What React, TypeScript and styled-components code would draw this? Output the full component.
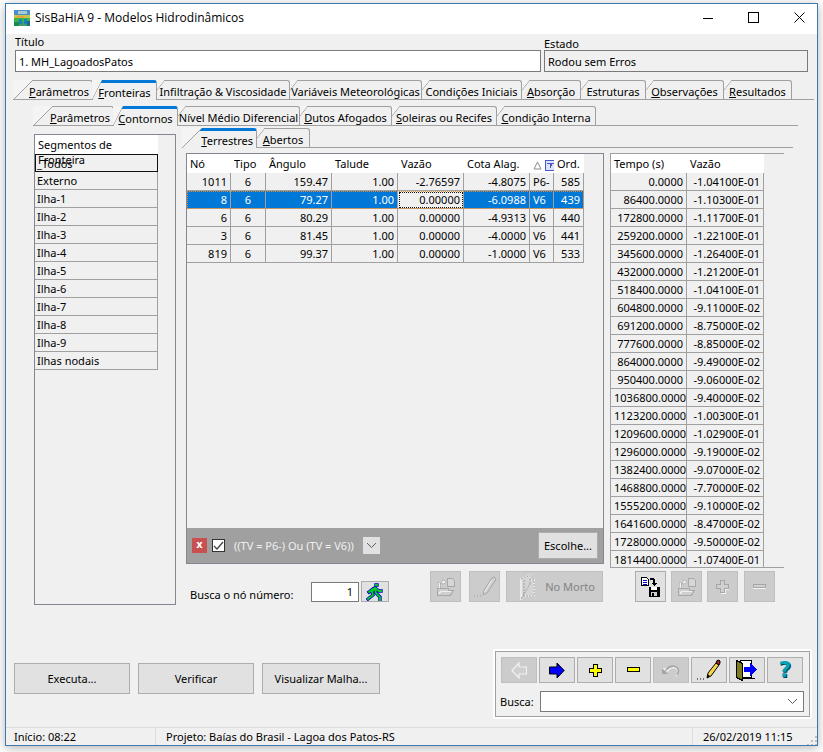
import React from 'react'
import styled, { createGlobalStyle } from 'styled-components'

const GlobalStyle = createGlobalStyle`
  html, body {
    margin: 0;
    padding: 0;
    background: #fff;
  }
  * {
    box-sizing: border-box;
  }
`

const Page = styled.div`
  width: 823px;
  height: 752px;
  padding: 3px 0 0 5px;
  font-family: 'Noto Sans', 'DejaVu Sans', sans-serif;
  font-size: 11px;
  color: #000;
  overflow: hidden;
`

const Window = styled.div`
  width: 813px;
  height: 743px;
  border: 1px solid #3d79ad;
  box-shadow: 0 2px 10px rgba(0, 0, 0, 0.3);
  background: #f0f0f0;
  display: flex;
  flex-direction: column;
`

// ============== TITLE BAR ==============
const TitleBar = styled.div`
  height: 30px;
  flex: none;
  background: #fff;
  display: flex;
  align-items: center;
  padding: 0 0 3px 8px;
`

const AppTitle = styled.span`
  margin-left: 5px;
  font-size: 12px;
  font-family: 'Open Sans', 'Noto Sans', sans-serif;
  letter-spacing: 0;
`

const WindowControls = styled.div`
  margin-left: auto;
  display: flex;
  align-items: center;
  padding-right: 12px;
  gap: 35px;
`

// ============== FIELDS ==============
const Body = styled.div`
  flex: 1;
  min-height: 0;
  display: flex;
  flex-direction: column;
`

const FieldsRow = styled.div`
  height: 38px;
  flex: none;
  display: flex;
  align-items: flex-end;
  padding-left: 9px;
  gap: 3px;
`

const Field = styled.div<{ $w: number }>`
  width: ${(p) => p.$w}px;
  display: flex;
  flex-direction: column;
`

const FieldLabel = styled.label<{ $mb: number }>`
  line-height: 13px;
  margin-bottom: ${(p) => p.$mb}px;
`

const TextBox = styled.div<{ $readonly?: boolean }>`
  height: 22px;
  border: 1px solid #7a7a7a;
  background: ${(p) => (p.$readonly ? '#f0f0f0' : '#fff')};
  display: flex;
  align-items: center;
  padding-left: 3px;
`

// ============== TABS ==============
const TabStrip = styled.div<{ $left: number; $w: number; $top: number }>`
  margin-top: ${(p) => p.$top}px;
  margin-left: ${(p) => p.$left}px;
  width: ${(p) => p.$w}px;
  height: 20px;
  flex: none;
  display: flex;
  border-bottom: 1px solid #a0a0a0;
`

const Tab = styled.div<{ $w: number; $active?: boolean; $first?: boolean }>`
  position: relative;
  width: ${(p) => p.$w}px;
  height: ${(p) => (p.$active ? 20 : 19)}px;
  flex: none;
  display: flex;
  align-items: center;
  justify-content: ${(p) => (p.$first ? 'flex-end' : 'center')};
  padding-right: ${(p) => (p.$first ? 3 : 0)}px;
  padding-top: 2px;
  white-space: nowrap;
  background: #f0f0f0;
  border-right: 1px solid #a0a0a0;
  border-top: ${(p) => (p.$active ? '3px solid #0078d7' : '1px solid #a0a0a0')};
  border-top-right-radius: 3px;
  z-index: ${(p) => (p.$active ? 2 : 1)};

  &::before {
    content: '';
    position: absolute;
    top: ${(p) => (p.$active ? -3 : -1)}px;
    left: ${(p) => (p.$first || p.$active ? -1 : 0)}px;
    width: ${(p) => (p.$first ? 20 : p.$active ? 10 : 8)}px;
    height: ${(p) => (p.$first ? 20 : p.$active ? 20 : 10)}px;
    background: linear-gradient(
      to bottom right,
      #f4f4f4 calc(50% - 0.6px),
      #a0a0a0 50%,
      transparent calc(50% + 0.6px)
    );
    background-color: transparent;
  }
`

const TabLabel = styled.span`
  position: relative;
  z-index: 1;
`

// ============== CONTENT ==============
const ContentRow = styled.div`
  flex: none;
  display: flex;
  padding-left: 28px;
  gap: 7px;
`

const SegmentPanel = styled.div`
  margin-top: 8px;
  width: 142px;
  height: 471px;
  border: 1px solid #828790;
  flex: none;
`

const SegmentHead = styled.div`
  width: 123px;
  height: 19px;
  background: #fff;
  padding: 2px 0 0 3px;
  line-height: 15px;
`

const SegmentRow = styled.div<{ $current?: boolean }>`
  width: 123px;
  height: 18px;
  padding-left: 2px;
  line-height: 17px;
  border-right: 1px solid #a0a0a0;
  border-bottom: 1px solid #a0a0a0;
  ${(p) => p.$current && 'border: 1px solid #111; width: 123px; padding-left: 1px;'}
`

const RightColumn = styled.div`
  margin-top: 2px;
  width: 610px;
  flex: none;
`

const TablesRow = styled.div`
  margin-top: 5px;
  padding-left: 3px;
  height: 415px;
  display: flex;
  gap: 6px;
  align-items: flex-start;
`

const TablePanel = styled.div`
  width: 418px;
  height: 411px;
  flex: none;
  border: 1px solid #828790;
  display: flex;
  flex-direction: column;
`

const TimePanel = styled.div`
  width: 174px;
  height: 415px;
  flex: none;
  overflow: hidden;
  border-top: 1px solid #a0a0a0;
  border-left: 1px solid #a0a0a0;
  border-bottom: 1px solid #a0a0a0;
`

const Grid = styled.table<{ $w: number }>`
  table-layout: fixed;
  border-collapse: separate;
  border-spacing: 0;
  width: ${(p) => p.$w}px;
  font-size: 11px;
`

const HeadCell = styled.th`
  height: 19px;
  padding: 0 0 0 3px;
  background: #fff;
  font-weight: 400;
  text-align: left;
  white-space: nowrap;
  overflow: hidden;
`

const Cell = styled.td<{ $align?: string; $selected?: boolean; $focus?: boolean }>`
  height: 18px;
  padding: 0 3px;
  text-align: ${(p) => p.$align || 'right'};
  white-space: nowrap;
  overflow: hidden;
  border-right: 1px solid #a0a0a0;
  border-bottom: 1px solid #a0a0a0;
  background: ${(p) => (p.$focus ? '#f0f0f0' : p.$selected ? '#0078d7' : '#f0f0f0')};
  color: ${(p) => (p.$selected && !p.$focus ? '#fff' : '#000')};
  ${(p) => p.$focus && 'outline: 1px dotted #111; outline-offset: -2px;'}
`

const GridRow = styled.tr<{ $selected?: boolean }>`
  ${(p) => p.$selected && 'outline: 1px dotted #e8862c; outline-offset: -1px;'}
`

const SortMarks = styled.span`
  display: inline-flex;
  align-items: center;
  gap: 3px;
  vertical-align: middle;
`

const GridSpace = styled.div`
  flex: 1;
`

const FilterBar = styled.div`
  height: 35px;
  flex: none;
  background: #a0a0a0;
  display: flex;
  align-items: center;
  padding-left: 5px;
  padding-right: 5px;
`

const ClearFilter = styled.div`
  width: 15px;
  height: 15px;
  background: #c75050;
  color: #fff;
  font-family: 'DejaVu Sans', sans-serif;
  font-size: 10px;
  font-weight: 700;
  line-height: 13px;
  text-align: center;
`

const Check = styled.div`
  margin-left: 5px;
  width: 13px;
  height: 13px;
  border: 1px solid #333;
  background: #fff;
  display: flex;
  align-items: center;
  justify-content: center;
`

const FilterText = styled.span`
  margin-left: 9px;
  color: #f0f0f0;
`

const FilterDrop = styled.div`
  margin-left: 9px;
  width: 17px;
  height: 17px;
  background: #e1e1e1;
  display: flex;
  align-items: center;
  justify-content: center;
`

const ChooseButton = styled.div`
  margin-left: auto;
  width: 60px;
  height: 27px;
  background: #e1e1e1;
  border: 1px solid #adadad;
  display: flex;
  align-items: center;
  justify-content: center;
`

// ============== ACTIONS ==============
const ActionsRow = styled.div`
  margin-top: 3px;
  display: flex;
  align-items: flex-start;
`

const SearchGroup = styled.div`
  width: 247px;
  height: 31px;
  padding: 10px 0 0 7px;
  display: flex;
  flex: none;
`

const SearchLabel = styled.span`
  width: 121px;
  padding-top: 6px;
  line-height: 15px;
`

const NumberBox = styled.div`
  width: 48px;
  height: 20px;
  margin-top: 1px;
  border: 1px solid #7a7a7a;
  background: #fff;
  text-align: right;
  padding-right: 5px;
  line-height: 18px;
`

const RunButton = styled.div`
  margin-left: 2px;
  width: 28px;
  height: 21px;
  background: #e1e1e1;
  border: 1px solid #adadad;
  display: flex;
  align-items: center;
  justify-content: center;
`

const IconButton = styled.div<{ $w?: number; $h?: number; $off?: boolean; $ml?: number }>`
  width: ${(p) => p.$w || 31}px;
  height: ${(p) => p.$h || 31}px;
  flex: none;
  margin-left: ${(p) => p.$ml || 0}px;
  background: ${(p) => (p.$off ? '#cccccc' : '#e1e1e1')};
  border: 1px solid ${(p) => (p.$off ? '#bfbfbf' : '#adadad')};
  color: #838383;
  display: flex;
  align-items: center;
  justify-content: center;
  gap: 5px;
`

// ============== BOTTOM ==============
const BottomRow = styled.div`
  margin-top: auto;
  margin-bottom: 8px;
  height: 70px;
  flex: none;
  display: flex;
  align-items: flex-start;
  padding-left: 8px;
`

const CommandGroup = styled.div`
  margin-top: 14px;
  display: flex;
  gap: 8px;
`

const CommandButton = styled.div<{ $w: number }>`
  width: ${(p) => p.$w}px;
  height: 31px;
  background: #e1e1e1;
  border: 1px solid #adadad;
  display: flex;
  align-items: center;
  justify-content: center;
`

const NavPanel = styled.div`
  margin-left: auto;
  margin-right: 5px;
  width: 319px;
  height: 70px;
  border: 2px solid #fff;
  box-shadow: inset 0 0 0 1px #a0a0a0;
  padding: 6px 0 0 6px;
`

const NavButtons = styled.div`
  display: flex;
  gap: 2px;
`

const Helper = styled.span`
  font-family: 'DejaVu Sans', sans-serif;
  font-size: 22px;
  font-weight: 700;
  line-height: 24px;
  color: #00a2b8;
  text-shadow: 1px 1px 0 #06405a;
`

const NavSearch = styled.div`
  margin-top: 8px;
  display: flex;
  align-items: center;
  margin-left: -1px;
`

const NavSearchLabel = styled.span`
  width: 40px;
`

const Combo = styled.div`
  width: 264px;
  height: 21px;
  border: 1px solid #7a7a7a;
  background: #fff;
  display: flex;
  align-items: center;
  justify-content: flex-end;
  padding-right: 5px;
`

const StatusBar = styled.div`
  height: 18px;
  flex: none;
  border-top: 1px solid #dcdcdc;
  display: flex;
  align-items: center;
  position: relative;
`

const StatusCell = styled.div<{ $w: number; $divider?: boolean }>`
  width: ${(p) => p.$w}px;
  height: 100%;
  flex: none;
  display: flex;
  align-items: center;
  padding-left: ${(p) => (p.$divider ? 10 : 8)}px;
  border-left: ${(p) => (p.$divider ? '1px solid #dcdcdc' : 'none')};
`

const Grip = styled.svg`
  margin-left: auto;
  align-self: flex-end;
`

// ============== ICONS ==============
const Logo = () => (
  <svg width="16" height="16" viewBox="0 0 16 16" shapeRendering="crispEdges">
    <rect width="16" height="16" fill="#3f9f6a" />
    <rect width="16" height="5" fill="#4a90c8" />
    <rect x="4" y="1" width="9" height="3" fill="#a7c9d8" />
    <rect y="5" width="16" height="3" fill="#c9c24a" />
    <rect x="3" y="6" width="7" height="2" fill="#e8a13c" />
    <rect y="8" width="16" height="4" fill="#39b44a" />
    <rect x="5" y="9" width="3" height="5" fill="#1c7fbe" />
    <rect x="10" y="9" width="3" height="5" fill="#1c7fbe" />
    <rect y="12" width="5" height="4" fill="#1d8a4c" />
    <rect x="13" y="11" width="3" height="5" fill="#1d6a8c" />
  </svg>
)

const MinIcon = () => (
  <svg width="10" height="10" viewBox="0 0 10 10" shapeRendering="crispEdges">
    <rect y="5" width="10" height="1" fill="#000" />
  </svg>
)

const MaxIcon = () => (
  <svg width="11" height="11" viewBox="0 0 11 11" shapeRendering="crispEdges">
    <rect x="0.5" y="0.5" width="10" height="10" fill="none" stroke="#000" />
  </svg>
)

const CloseIcon = () => (
  <svg width="11" height="11" viewBox="0 0 11 11">
    <path d="M0.5 0.5 L10.5 10.5 M10.5 0.5 L0.5 10.5" stroke="#000" fill="none" />
  </svg>
)

const SortIcon = () => (
  <svg width="9" height="9" viewBox="0 0 9 9">
    <path d="M4.5 1 L8 8 H1 Z" fill="none" stroke="#8c8c8c" />
  </svg>
)

const FunnelIcon = () => (
  <svg width="11" height="11" viewBox="0 0 11 11" shapeRendering="crispEdges">
    <rect x="0.5" y="0.5" width="10" height="10" fill="#d9e4fb" stroke="#4a55c8" />
    <path d="M2 3 H9 V4 H7 V6 H6 V8 H5 V4 H2 Z" fill="#4a55c8" />
  </svg>
)

const CheckMark = () => (
  <svg width="11" height="11" viewBox="0 0 11 11">
    <path d="M1 6 L4 9 L10 2" stroke="#444" strokeWidth="1.3" fill="none" />
  </svg>
)

const Chevron = ({ color = '#606060' }: { color?: string }) => (
  <svg width="11" height="7" viewBox="0 0 11 7">
    <path d="M1 1 L5.5 5.5 L10 1" stroke={color} fill="none" />
  </svg>
)

const Runner = () => (
  <svg width="18" height="18" viewBox="0 0 18 18">
    <g fill="none" strokeLinecap="square">
      <path
        d="M10 2 h1 M9 5 L6 9 L7 12 L2 16 M9 5 L10 10 L14 14 V17 M9 5 L13 8 H15 M7 6 L3 9"
        stroke="#0000c8"
        strokeWidth="3.4"
      />
      <path
        d="M10 2 h1 M9 5 L6 9 L7 12 L2 16 M9 5 L10 10 L14 14 V17 M9 5 L13 8 H15 M7 6 L3 9"
        stroke="#00d020"
        strokeWidth="1.8"
      />
    </g>
  </svg>
)

const OpenDocIcon = () => (
  <svg width="20" height="20" viewBox="0 0 20 20" shapeRendering="crispEdges">
    <path d="M11.5 1.5 H16.5 L18.5 3.5 V9.5 H11.5 Z" fill="#d6d6d6" stroke="#a8a8a8" />
    <path d="M6 2 L10 5 L6 8 V6 H4 V11 H2 V5 H6 Z" fill="#f0f0f0" stroke="#a8a8a8" strokeWidth="0.6" />
    <path d="M1.5 11.5 H12.5 V13.5 H17.5 L14.5 18.5 H1.5 Z" fill="#cfcfcf" stroke="#a8a8a8" />
    <path d="M3 17 L5 14 H15" fill="none" stroke="#f0f0f0" />
  </svg>
)

const PencilIcon = ({ off }: { off?: boolean }) => (
  <svg width="26" height="24" viewBox="0 0 26 24">
    {off ? (
      <>
        <path d="M11 20 L12 15 L20 3 Q22 1 23.5 3 Q24.5 5 23 6 L15 18 Z" fill="#cfcfcf" stroke="#a6a6a6" />
        <path d="M12.5 17 L20 5" stroke="#f0f0f0" />
        <path d="M5 21 h1 M8 21 h1 M2 21 h1" stroke="#9a9a9a" />
      </>
    ) : (
      <>
        <path d="M11 20 L12 15 L20 5 L23 7 L15 18 Z" fill="#f5d64a" stroke="#000" />
        <path d="M20 5 L21 2.5 Q23 1.5 24 3 Q24.5 5 23 7 Z" fill="#9c1f2a" stroke="#000" />
        <path d="M11 20 L12 16.5 L14 18 Z" fill="#000" />
        <path d="M1 21 h1 M4 21 h1 M7 21 h1" stroke="#000" />
      </>
    )}
  </svg>
)

const DeadNodeIcon = () => (
  <svg width="26" height="26" viewBox="0 0 26 26">
    <path d="M7 5 L16 1.5 V6 H20 V22 H10 L7 25 Z" fill="#d4d4d4" stroke="#f2f2f2" strokeWidth="1.6" />
    <path d="M7 5 L16 1.5 V6 M16 10 V6 H20 V22 H10 L7 25 Z M10 6 V22" fill="none" stroke="#a0a0a0" strokeDasharray="2 1" />
  </svg>
)

const SaveDocIcon = () => (
  <svg width="20" height="20" viewBox="0 0 20 20" shapeRendering="crispEdges">
    <path d="M0.5 0.5 H5.5 L7.5 2.5 V8.5 H0.5 Z" fill="#fff" stroke="#000" />
    <path d="M2 3 H6 M2 5 H6 M2 7 H6" stroke="#0000d0" />
    <path d="M9 1 H12 L14 3 V6 H16 L13.5 9 L11 6 H12 V3 H9 Z" fill="#000" />
    <path d="M7.5 9.5 H18.5 V19.5 H7.5 Z" fill="#000" />
    <rect x="10" y="10" width="6" height="3" fill="#fff" />
    <rect x="10" y="15" width="6" height="4" fill="#d0d0d0" />
    <rect x="11" y="16" width="2" height="3" fill="#000" />
  </svg>
)

const OffPlus = () => (
  <svg width="15" height="15" viewBox="0 0 15 15" shapeRendering="crispEdges">
    <path d="M5.5 1.5 H9.5 V5.5 H13.5 V9.5 H9.5 V13.5 H5.5 V9.5 H1.5 V5.5 H5.5 Z" fill="#d0d0d0" stroke="#a6a6a6" />
    <path d="M6 14 H10 V10 H14" fill="none" stroke="#f4f4f4" />
  </svg>
)

const OffMinus = () => (
  <svg width="15" height="7" viewBox="0 0 15 7" shapeRendering="crispEdges">
    <rect x="1.5" y="1.5" width="12" height="3" fill="#d0d0d0" stroke="#a6a6a6" />
    <path d="M1 5.5 H14" stroke="#f4f4f4" />
  </svg>
)

const ArrowIcon = ({ off }: { off?: boolean }) => (
  <svg width="16" height="17" viewBox="0 0 16 17" shapeRendering="geometricPrecision">
    {off ? (
      <path d="M15.5 5 H8 V1 L0.8 8.5 L8 16 V12 H15.5 Z" fill="#cfcfcf" stroke="#f2f2f2" strokeWidth="1.2" />
    ) : (
      <path d="M0.5 5 H8 V1 L15.2 8.5 L8 16 V12 H0.5 Z" fill="#0000ff" stroke="#000" />
    )}
  </svg>
)

const YellowPlus = () => (
  <svg width="13" height="13" viewBox="0 0 13 13" shapeRendering="crispEdges">
    <path d="M4.5 0.5 H8.5 V4.5 H12.5 V8.5 H8.5 V12.5 H4.5 V8.5 H0.5 V4.5 H4.5 Z" fill="#ffff00" stroke="#000" />
  </svg>
)

const YellowMinus = () => (
  <svg width="13" height="6" viewBox="0 0 13 6" shapeRendering="crispEdges">
    <rect x="0.5" y="0.5" width="12" height="4" fill="#ffff00" stroke="#000" />
  </svg>
)

const UndoIcon = () => (
  <svg width="20" height="14" viewBox="0 0 20 14">
    <path d="M1 6 H8 L6 8.5 Q9 4 13 4.5 Q17 5 17 9 Q17 11 15 13" fill="none" stroke="#f4f4f4" strokeWidth="1.6" />
    <path d="M1 11 V5 L7 11 Z" fill="#a6a6a6" />
    <path d="M5 7 Q9 2.5 13 3.2 Q17 4 17.5 8 Q17.5 10 16 12" fill="none" stroke="#a6a6a6" strokeWidth="1.6" />
  </svg>
)

const ExitIcon = () => (
  <svg width="22" height="22" viewBox="0 0 22 22" shapeRendering="crispEdges">
    <rect x="4.5" y="1.5" width="11" height="17" fill="#fff" stroke="#000" />
    <path d="M0.5 1.5 L6.5 4.5 V21.5 L0.5 18.5 Z" fill="#7d7d1e" stroke="#000" />
    <path d="M8 8 H14 V4 L21 10.5 L14 17 V13 H8 Z" fill="#0000ff" />
    <path d="M7 19.5 H19" stroke="#000" />
  </svg>
)

// ============== DADOS ==============
const nodeCols = [44, 35, 66, 66, 66, 66, 24, 30]

const nodes = [
  ['1011', '6', '159.47', '1.00', '-2.76597', '-4.8075', 'P6-', '585'],
  ['8', '6', '79.27', '1.00', '0.00000', '-6.0988', 'V6', '439'],
  ['6', '6', '80.29', '1.00', '0.00000', '-4.9313', 'V6', '440'],
  ['3', '6', '81.45', '1.00', '0.00000', '-4.0000', 'V6', '441'],
  ['819', '6', '99.37', '1.00', '0.00000', '-1.0000', 'V6', '533']
]

const series = [
  ['0.0000', '-1.04100E-01'],
  ['86400.0000', '-1.10300E-01'],
  ['172800.0000', '-1.11700E-01'],
  ['259200.0000', '-1.22100E-01'],
  ['345600.0000', '-1.26400E-01'],
  ['432000.0000', '-1.21200E-01'],
  ['518400.0000', '-1.04100E-01'],
  ['604800.0000', '-9.11000E-02'],
  ['691200.0000', '-8.75000E-02'],
  ['777600.0000', '-8.85000E-02'],
  ['864000.0000', '-9.49000E-02'],
  ['950400.0000', '-9.06000E-02'],
  ['1036800.0000', '-9.40000E-02'],
  ['1123200.0000', '-1.00300E-01'],
  ['1209600.0000', '-1.02900E-01'],
  ['1296000.0000', '-9.19000E-02'],
  ['1382400.0000', '-9.07000E-02'],
  ['1468800.0000', '-7.70000E-02'],
  ['1555200.0000', '-9.10000E-02'],
  ['1641600.0000', '-8.47000E-02'],
  ['1728000.0000', '-9.50000E-02'],
  ['1814400.0000', '-1.07400E-01']
]

const segments = [
  'Externo',
  'Ilha-1',
  'Ilha-2',
  'Ilha-3',
  'Ilha-4',
  'Ilha-5',
  'Ilha-6',
  'Ilha-7',
  'Ilha-8',
  'Ilha-9',
  'Ilhas nodais'
]

// Primeira letra sublinhada é a tecla de atalho da aba
const mainTabs: [string, string, number][] = [
  ['P', 'arâmetros', 79],
  ['F', 'ronteiras', 64],
  ['', 'Infiltração & Viscosidade', 133],
  ['', 'Variáveis Meteorológicas', 132],
  ['', 'Condições Iniciais', 100],
  ['A', 'bsorção', 59],
  ['', 'Estruturas', 65],
  ['O', 'bservações', 78],
  ['R', 'esultados', 68]
]

const subTabs: [string, string, number][] = [
  ['P', 'arâmetros', 80],
  ['C', 'ontornos', 64],
  ['', 'Nível Médio Diferencial', 122],
  ['D', 'utos Afogados', 92],
  ['S', 'oleiras ou Recifes', 105],
  ['C', 'ondição Interna', 99]
]

const TabRow = ({ tabs, active }: { tabs: [string, string, number][]; active: number }) => (
  <>
    {tabs.map(([key, rest, w], i) => (
      <Tab key={key + rest} $w={w} $active={i === active} $first={i === 0}>
        <TabLabel>
          {key && <u>{key}</u>}
          {rest}
        </TabLabel>
      </Tab>
    ))}
  </>
)

const App: React.FC = () => {
  return (
    <Page>
      <GlobalStyle />
      <Window>
        <TitleBar>
          <Logo />
          <AppTitle>SisBaHiA 9 - Modelos Hidrodinâmicos</AppTitle>
          <WindowControls>
            <MinIcon />
            <MaxIcon />
            <CloseIcon />
          </WindowControls>
        </TitleBar>

        <Body>
          <FieldsRow>
            <Field $w={526}>
              <FieldLabel $mb={2}>Título</FieldLabel>
              <TextBox>1. MH_LagoadosPatos</TextBox>
            </Field>
            <Field $w={264}>
              <FieldLabel $mb={0}>Estado</FieldLabel>
              <TextBox $readonly>Rodou sem Erros</TextBox>
            </Field>
          </FieldsRow>

          <TabStrip $top={8} $left={8} $w={800}>
            <TabRow tabs={mainTabs} active={1} />
          </TabStrip>
          <TabStrip $top={6} $left={28} $w={764}>
            <TabRow tabs={subTabs} active={1} />
          </TabStrip>

          <ContentRow>
            <SegmentPanel>
              <SegmentHead>Segmentos de Fronteira</SegmentHead>
              <SegmentRow $current>_Todos</SegmentRow>
              {segments.map((s) => (
                <SegmentRow key={s}>{s}</SegmentRow>
              ))}
            </SegmentPanel>

            <RightColumn>
              <TabStrip $top={0} $left={0} $w={610}>
                <Tab $w={74} $active $first>
                  <TabLabel>
                    <u>T</u>errestres
                  </TabLabel>
                </Tab>
                <Tab $w={53}>
                  <TabLabel>
                    <u>A</u>bertos
                  </TabLabel>
                </Tab>
              </TabStrip>

              <TablesRow>
                <TablePanel>
                  <Grid $w={397}>
                    <colgroup>
                      {nodeCols.map((w, i) => (
                        <col key={i} width={w} />
                      ))}
                    </colgroup>
                    <thead>
                      <tr>
                        <HeadCell>Nó</HeadCell>
                        <HeadCell>Tipo</HeadCell>
                        <HeadCell>Ângulo</HeadCell>
                        <HeadCell>Talude</HeadCell>
                        <HeadCell>Vazão</HeadCell>
                        <HeadCell>Cota Alag.</HeadCell>
                        <HeadCell>
                          <SortMarks>
                            <SortIcon />
                            <FunnelIcon />
                          </SortMarks>
                        </HeadCell>
                        <HeadCell>Ord.</HeadCell>
                      </tr>
                    </thead>
                    <tbody>
                      {nodes.map((row, r) => (
                        <GridRow key={row[0]} $selected={r === 1}>
                          {row.map((v, c) => (
                            <Cell
                              key={c}
                              $align={c === 1 ? 'center' : c === 6 ? 'left' : 'right'}
                              $selected={r === 1}
                              $focus={r === 1 && c === 4}
                            >
                              {v}
                            </Cell>
                          ))}
                        </GridRow>
                      ))}
                    </tbody>
                  </Grid>
                  <GridSpace />
                  <FilterBar>
                    <ClearFilter>x</ClearFilter>
                    <Check>
                      <CheckMark />
                    </Check>
                    <FilterText>((TV = P6-) Ou (TV = V6))</FilterText>
                    <FilterDrop>
                      <Chevron />
                    </FilterDrop>
                    <ChooseButton>Escolhe...</ChooseButton>
                  </FilterBar>
                </TablePanel>

                <TimePanel>
                  <Grid $w={153}>
                    <colgroup>
                      <col width={76} />
                      <col width={77} />
                    </colgroup>
                    <thead>
                      <tr>
                        <HeadCell>Tempo (s)</HeadCell>
                        <HeadCell>Vazão</HeadCell>
                      </tr>
                    </thead>
                    <tbody>
                      {series.map((row) => (
                        <tr key={row[0]}>
                          <Cell>{row[0]}</Cell>
                          <Cell>{row[1]}</Cell>
                        </tr>
                      ))}
                    </tbody>
                  </Grid>
                </TimePanel>
              </TablesRow>

              <ActionsRow>
                <SearchGroup>
                  <SearchLabel>Busca o nó número:</SearchLabel>
                  <NumberBox>1</NumberBox>
                  <RunButton>
                    <Runner />
                  </RunButton>
                </SearchGroup>
                <IconButton $off>
                  <OpenDocIcon />
                </IconButton>
                <IconButton $off $ml={8}>
                  <PencilIcon off />
                </IconButton>
                <IconButton $off $ml={6} $w={97}>
                  <DeadNodeIcon />
                  No Morto
                </IconButton>
                <IconButton $ml={32}>
                  <SaveDocIcon />
                </IconButton>
                <IconButton $off $ml={5}>
                  <OpenDocIcon />
                </IconButton>
                <IconButton $off $ml={5}>
                  <OffPlus />
                </IconButton>
                <IconButton $off $ml={6}>
                  <OffMinus />
                </IconButton>
              </ActionsRow>
            </RightColumn>
          </ContentRow>

          <BottomRow>
            <CommandGroup>
              <CommandButton $w={116}>Executa...</CommandButton>
              <CommandButton $w={116}>Verificar</CommandButton>
              <CommandButton $w={118}>Visualizar Malha...</CommandButton>
            </CommandGroup>
            <NavPanel>
              <NavButtons>
                <IconButton $off $w={36} $h={26}>
                  <ArrowIcon off />
                </IconButton>
                <IconButton $w={36} $h={26}>
                  <ArrowIcon />
                </IconButton>
                <IconButton $w={36} $h={26}>
                  <YellowPlus />
                </IconButton>
                <IconButton $w={36} $h={26}>
                  <YellowMinus />
                </IconButton>
                <IconButton $off $w={36} $h={26}>
                  <UndoIcon />
                </IconButton>
                <IconButton $w={36} $h={26}>
                  <PencilIcon />
                </IconButton>
                <IconButton $w={36} $h={26}>
                  <ExitIcon />
                </IconButton>
                <IconButton $w={36} $h={26}>
                  <Helper>?</Helper>
                </IconButton>
              </NavButtons>
              <NavSearch>
                <NavSearchLabel>Busca:</NavSearchLabel>
                <Combo>
                  <Chevron />
                </Combo>
              </NavSearch>
            </NavPanel>
          </BottomRow>
        </Body>

        <StatusBar>
          <StatusCell $w={149}>Início: 08:22</StatusCell>
          <StatusCell $w={537} $divider>
            Projeto: Baías do Brasil - Lagoa dos Patos-RS
          </StatusCell>
          <StatusCell $w={112} $divider>
            26/02/2019 11:15
          </StatusCell>
          <Grip width="10" height="10" viewBox="0 0 10 10" shapeRendering="crispEdges">
            <path d="M8 1h2v2H8zM4 5h2v2H4zM8 5h2v2H8zM0 9h2v1H0zM4 9h2v1H4zM8 9h2v1H8z" fill="#bdbdbd" />
          </Grip>
        </StatusBar>
      </Window>
    </Page>
  )
}

export default App
